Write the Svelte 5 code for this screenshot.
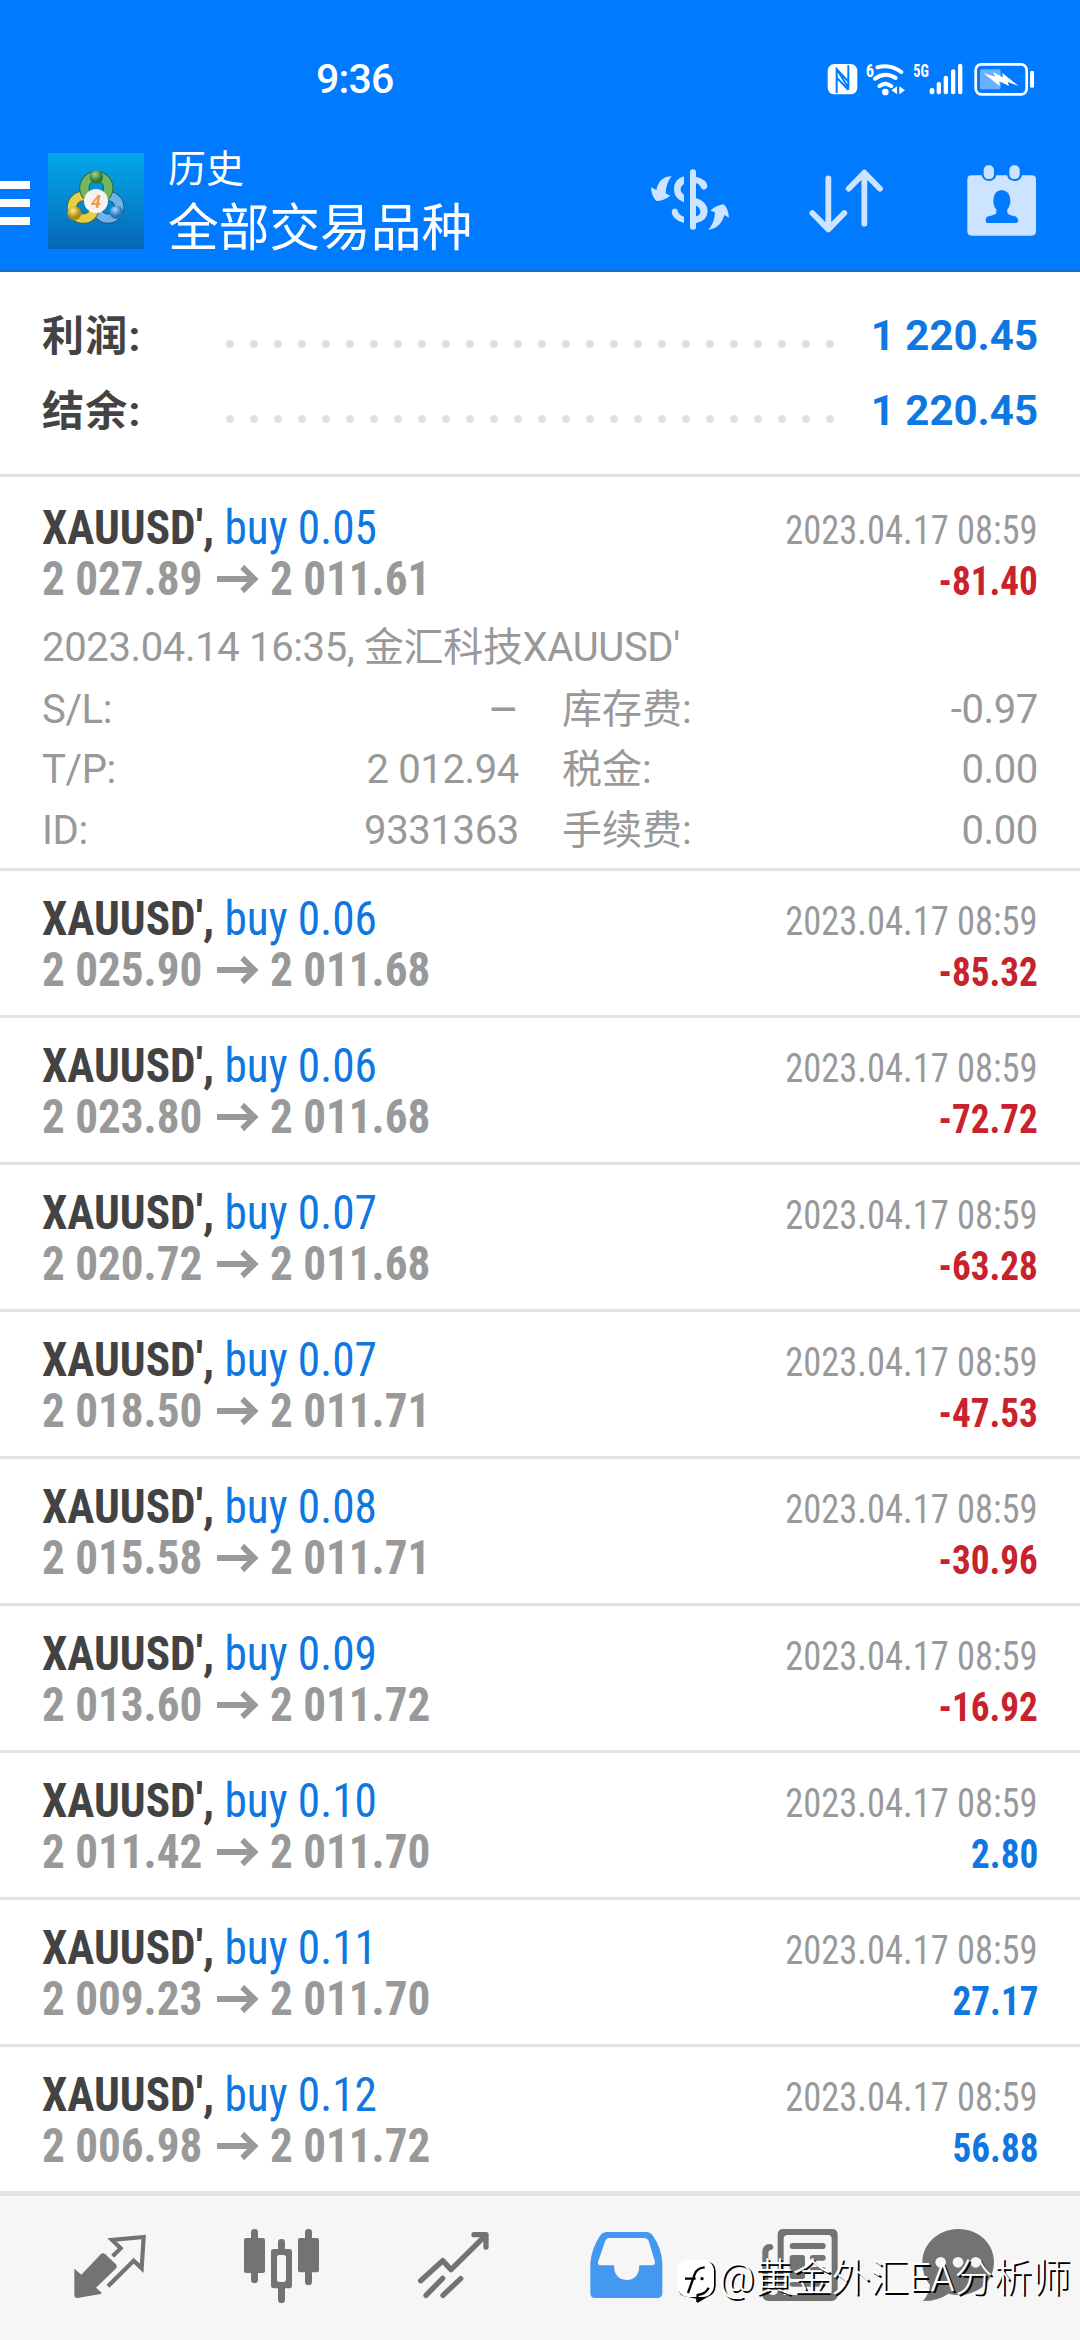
<script>
	const summary = [
		{ label: '利润:', value: '1 220.45' },
		{ label: '结余:', value: '1 220.45' }
	];

	const deals = [
		{ lot: '0.05', open: '2 027.89', close: '2 011.61', profit: '-81.40', expanded: true },
		{ lot: '0.06', open: '2 025.90', close: '2 011.68', profit: '-85.32' },
		{ lot: '0.06', open: '2 023.80', close: '2 011.68', profit: '-72.72' },
		{ lot: '0.07', open: '2 020.72', close: '2 011.68', profit: '-63.28' },
		{ lot: '0.07', open: '2 018.50', close: '2 011.71', profit: '-47.53' },
		{ lot: '0.08', open: '2 015.58', close: '2 011.71', profit: '-30.96' },
		{ lot: '0.09', open: '2 013.60', close: '2 011.72', profit: '-16.92' },
		{ lot: '0.10', open: '2 011.42', close: '2 011.70', profit: '2.80' },
		{ lot: '0.11', open: '2 009.23', close: '2 011.70', profit: '27.17' },
		{ lot: '0.12', open: '2 006.98', close: '2 011.72', profit: '56.88' }
	];

	const details = [
		['S/L:', '–', '库存费:', '-0.97'],
		['T/P:', '2 012.94', '税金:', '0.00'],
		['ID:', '9331363', '手续费:', '0.00']
	];
</script>

<div class="screen">
	<header>
		<div class="status">
			<span class="time">9:36</span>
			<svg class="status-icons" viewBox="555 30 635 110" fill="#fff">
				<!-- nfc -->
				<rect x="563" y="39" width="89" height="91" rx="20" />
				<path d="M590 126V54L625 92V116M590 54L625 110M590 80L625 116M625 43V92" fill="none" stroke="#007aff" stroke-width="6" />
				<!-- wifi -->
				<text class="net" x="677" y="77" font-size="55" textLength="25" lengthAdjust="spacingAndGlyphs">6</text>
				<g fill="none" stroke="#fff" stroke-width="12" stroke-linecap="round">
					<path d="M712 49Q750 38 784 63M705 83Q735 60 767 81M718 105Q736 92 754 105" />
				</g>
				<circle cx="736" cy="123" r="10" />
				<path d="M754 118L771 106V130ZM795 118L778 106V130Z" />
				<!-- signal -->
				<text class="net" x="820" y="78" font-size="53" textLength="47" lengthAdjust="spacingAndGlyphs">5G</text>
				<rect x="869" y="111" width="14" height="19" rx="6" />
				<rect x="890" y="93" width="13" height="37" rx="6" />
				<rect x="911" y="74" width="13" height="56" rx="6" />
				<rect x="933" y="55" width="13" height="75" rx="6" />
				<rect x="954" y="38" width="13" height="92" rx="6" />
				<!-- battery -->
				<rect x="1007" y="40" width="153" height="90" rx="17" fill="none" stroke="#fff" stroke-width="8" />
				<rect x="1020" y="55" width="62" height="60" rx="5" fill="#69b0ff" />
				<path d="M1030 66L1065 77L1060 64L1089 79L1086 65L1136 105L1103 93L1107 105L1078 91L1079 105Z" />
				<rect x="1170" y="60" width="12" height="50" rx="4" />
			</svg>
		</div>
		<div class="appbar">
			<div class="menu"><i></i><i></i><i></i></div>
			<svg class="logo" viewBox="144 39 288 288">
				<defs>
					<linearGradient id="bg" x1="0" y1="0" x2="0" y2="1">
						<stop offset="0" stop-color="#00a7ea" />
						<stop offset=".5" stop-color="#0588cf" />
						<stop offset="1" stop-color="#0465b4" />
					</linearGradient>
					<radialGradient id="green" cx=".4" cy=".3">
						<stop offset="0" stop-color="#a6d68c" />
						<stop offset="1" stop-color="#2e7a35" />
					</radialGradient>
					<radialGradient id="gold" cx=".4" cy=".3">
						<stop offset="0" stop-color="#fff08a" />
						<stop offset="1" stop-color="#b08a10" />
					</radialGradient>
					<radialGradient id="blue" cx=".4" cy=".3">
						<stop offset="0" stop-color="#a5dcff" />
						<stop offset="1" stop-color="#2374bd" />
					</radialGradient>
				</defs>
				<rect x="144" y="39" width="288" height="288" fill="url(#bg)" />
				<g stroke="#46bff0" stroke-opacity=".12" stroke-width="2">
					{#each [1, 2, 3, 4, 5, 6, 7, 8, 9, 10, 11] as n}
						<path d="M{144 + n * 24} 39V327M144 {39 + n * 24}H432" />
					{/each}
				</g>
				<g fill="none" stroke-width="25">
					<circle cx="324" cy="202" r="34" stroke="#174f85" stroke-width="30" />
					<circle cx="324" cy="202" r="34" stroke="#6fb4e6" />
					<circle cx="250" cy="202" r="34" stroke="#67651c" stroke-width="30" />
					<circle cx="250" cy="202" r="34" stroke="#e2d047" />
					<circle cx="289" cy="144" r="36" stroke="#236332" stroke-width="30" />
					<circle cx="289" cy="144" r="36" stroke="#74b562" />
				</g>
				<circle cx="289" cy="111" r="20" fill="url(#green)" />
				<circle cx="223" cy="220" r="21" fill="url(#gold)" />
				<circle cx="349" cy="217" r="20" fill="url(#blue)" />
				<circle cx="288" cy="183" r="36" fill="#f7f3ef" />
				<text class="four" x="288" y="203" text-anchor="middle">4</text>
			</svg>
			<div class="titles">
				<div class="small">历史</div>
				<div class="big">全部交易品种</div>
			</div>
			<div class="actions">
				<svg width="80" height="66.7" viewBox="30 353 240 200" fill="#cce4ff">
					<path d="M95 378Q58 378 49 419L33 411Q34 438 49 452Q70 452 91 436L77 429Q78 398 95 378Z" />
					<path d="M205 538Q242 534 253 494L267 502Q265 475 251 462Q229 464 211 481L225 486Q224 518 205 538Z" />
					<rect x="150" y="357" width="18" height="181" rx="8" />
					<path d="M132 378V400Q110 416 132 434V456Q102 446 102 417Q102 386 132 378Z" />
					<path d="M168 379Q202 387 202 410Q192 425 183 412Q179 401 168 398ZM168 443Q203 454 203 483Q203 511 168 519V498Q181 496 181 483Q181 472 168 466Z" />
					<path d="M132 518Q95 508 95 481Q102 469 112 478Q115 494 132 499Z" />
				</svg>
				<svg width="80" height="66.7" viewBox="500 353 240 200" fill="none" stroke="#cce4ff" stroke-width="17.500" stroke-linecap="round" stroke-linejoin="round">
					<path d="M564 384V537M516 488L564 537L612 488M672 520V367M625 415L672 367L719 415" />
				</svg>
				<svg width="76.700" height="76.700" viewBox="970 338 230 230" fill="#cce4ff">
					<path d="M996 375H1026Q1031 392 1048 392Q1066 392 1070 375H1102Q1106 392 1125 392Q1144 392 1147 375H1176Q1189 375 1189 388V543Q1189 556 1176 556H996Q983 556 983 543V388Q983 375 996 375Z" />
					<rect x="1032" y="345" width="31" height="41" rx="14" />
					<rect x="1109" y="345" width="31" height="41" rx="14" />
					<path d="M1086 419Q1113 421 1112 454Q1110 470 1103 477V488Q1108 495 1127 498Q1136 502 1135 513Q1135 518 1128 518H1045Q1038 518 1038 513Q1037 501 1046 498Q1066 494 1070 488V477Q1062 470 1061 454Q1060 421 1086 419Z" fill="#007aff" />
				</svg>
			</div>
		</div>
	</header>

	<section class="summary">
		{#each summary as s}
			<div class="total">
				<b class="label">{s.label}</b>
				<span class="dots"></span>
				<b class="value">{s.value}</b>
			</div>
		{/each}
	</section>

	<main>
		{#each deals as d}
			<article class:expanded={d.expanded}>
				<div class="line">
					<div class="name"><b>XAUUSD',</b> <span>buy {d.lot}</span></div>
					<div class="date">2023.04.17 08:59</div>
				</div>
				<div class="line">
					<div class="prices">
						<span>{d.open}</span>
						<svg width="45" height="30" viewBox="0 0 45 30" fill="none" stroke="#999" stroke-width="6"><path d="M0 15H40M27 3L40 15L27 27" /></svg>
						<span>{d.close}</span>
					</div>
					<div class="profit" class:loss={d.profit.startsWith('-')}>{d.profit}</div>
				</div>
				{#if d.expanded}
					<div class="details">
						<div class="comment">2023.04.14 16:35, 金汇科技XAUUSD'</div>
						{#each details as row}
							<div class="row">
								<span>{row[0]}</span>
								<span class="num" class:dash={row[1] === '–'}>{row[1]}</span>
								<span class="second">{row[2]}</span>
								<span class="num">{row[3]}</span>
							</div>
						{/each}
					</div>
				{/if}
			</article>
		{/each}
	</main>

	<nav>
		<!-- quotes -->
		<div class="tab">
			<svg viewBox="30 138 240 240" fill="#737373">
				<path d="M43 266L64 284L122 223Q129 216 136 223L168 253Q173 260 167 266L108 323L125 338Q125 342 118 343L52 354Q43 354 43 346Z" />
				<path d="M158 229L182 205L156 180L251 171L245 265L221 242L144 319" fill="none" stroke="#737373" stroke-width="12.500" />
			</svg>
		</div>
		<!-- charts -->
		<div class="tab">
			<svg viewBox="546 138 240 240" fill="#737373">
				<rect x="573" y="147" width="21" height="162" rx="10" />
				<rect x="552" y="174" width="63" height="105" rx="6" />
				<rect x="735" y="147" width="21" height="168" rx="10" />
				<rect x="714" y="174" width="63" height="103" rx="6" />
				<rect x="654" y="177" width="21" height="192" rx="10" />
				<rect x="633" y="207" width="63" height="118" rx="8" />
				<rect x="651" y="225" width="27" height="81" rx="7" fill="#f6f6f6" />
			</svg>
		</div>
		<!-- trade -->
		<div class="tab">
			<svg viewBox="1062 138 240 240" fill="none" stroke="#737373" stroke-width="16" stroke-linecap="round" stroke-linejoin="round">
				<path d="M1082 302L1148 242L1173 269L1275 168M1242 164H1278V201M1098 346L1148 295M1149 346L1202 296" />
				<path d="M1256 168H1278V190Z" fill="#737373" stroke="none" />
			</svg>
		</div>
		<!-- history -->
		<div class="tab">
			<svg viewBox="18 138 240 240">
				<path d="M78 156H201Q212 157 219 167Q245 205 247 250V339Q247 354 232 354H45Q31 354 31 339V250Q34 206 60 167Q67 157 78 156Z" fill="#4498f0" />
				<path d="M86 174H193Q202 175 206 182L225 246Q226 255 216 256H178Q177 300 140 300Q103 299 102 256H62Q52 255 54 246L76 182Q79 175 86 174Z" fill="#f6f6f6" />
			</svg>
		</div>
		<!-- news -->
		<div class="tab">
			<svg viewBox="534 138 240 240" fill="#737373">
				<path fill-rule="evenodd" d="M610 147H756Q773 147 773 164V343Q773 363 753 363H566Q547 362 547 343V216Q547 193 570 192Q580 193 580 202Q580 209 571 210Q565 211 565 219V334Q565 345 579 345Q593 344 593 332V164Q593 147 610 147ZM623 165Q611 165 611 176V345H744Q755 345 755 332V176Q755 165 744 165Z" />
				<rect x="629" y="189" width="108" height="18" rx="9" />
				<rect x="629" y="225" width="46" height="72" rx="8" />
				<rect x="690" y="225" width="47" height="17" rx="8" />
				<rect x="690" y="261" width="47" height="17" rx="8" />
				<rect x="629" y="306" width="108" height="14" rx="7" />
			</svg>
		</div>
		<!-- chat -->
		<div class="tab last">
			<svg viewBox="1014 138 240 240" fill="#737373">
				<path d="M1135 147C1196 147 1242 191 1242 246C1242 303 1196 345 1135 345Q1119 345 1105 341Q1075 363 1029 363Q1048 340 1050 315Q1027 288 1027 248C1027 192 1075 147 1135 147Z" />
				<g fill="#f6f6f6">
					<circle cx="1082" cy="247" r="16" />
					<circle cx="1134" cy="247" r="16" />
					<circle cx="1187" cy="247" r="16" />
				</g>
			</svg>
		</div>
		<div class="mark">
			<svg width="42" height="46" viewBox="286 236 126 138">
				<path d="M325 246H376Q404 248 405 276V319Q404 345 382 352L350 371L348 358L308 350Q296 345 296 334Z" fill="#000" />
				<rect x="290" y="241" width="110" height="112" rx="34" fill="#fff" />
				<path d="M322 341L342 285Q349 265 372 264M313 298H345M350 368L351 347Q376 343 384 325" fill="none" stroke="#000" stroke-width="7" />
				<circle cx="364" cy="298" r="5" />
			</svg>
			<span>@黄金外汇EA分析师</span>
		</div>
	</nav>
</div>

<style>
	:global(body) {
		background: #fff;
	}

	.screen {
		width: 1080px;
		height: 2340px;
		overflow: hidden;
		display: flex;
		flex-direction: column;
		font-family: Roboto, "Noto Sans CJK SC", sans-serif;
		color: #999;
		background: #fff;
	}

	svg {
		display: block;
		flex: none;
	}

	header {
		box-sizing: border-box;
		flex: none;
		height: 272px;
		background: #007aff;
		border-bottom: 2px solid #1a6dc4;
		color: #fff;
	}

	.status {
		box-sizing: border-box;
		height: 120px;
		padding: 38px 43px 0 316px;
		display: flex;
		align-items: center;
		justify-content: space-between;
	}

	.time {
		font-size: 41px;
		font-weight: 500;
		letter-spacing: -0.8px;
	}

	.status-icons {
		width: 211.700px;
		height: 36.700px;
	}

	.net {
		font-family: "Roboto Condensed", Roboto, sans-serif;
		font-weight: 700;
	}

	.appbar {
		box-sizing: border-box;
		height: 150px;
		padding: 12px 40px 0 0;
		display: flex;
		align-items: center;
	}

	.menu {
		width: 30px;
		display: grid;
		gap: 10px;
		margin: 4px 18px 0 0;
	}

	.menu i {
		height: 8px;
		background: #fff;
	}

	.logo {
		width: 96px;
		height: 96px;
	}

	.four {
		font-size: 54px;
		font-style: italic;
		font-weight: 700;
		fill: #ef9a4a;
	}

	.titles {
		margin: -5px 0 0 24px;
		line-height: 60px;
		white-space: nowrap;
	}

	.small {
		font-size: 38px;
	}

	.big {
		font-size: 50.700px;
	}

	.actions {
		margin-left: auto;
		display: flex;
		align-items: center;
		gap: 76.700px;
	}

	.summary {
		box-sizing: border-box;
		flex: none;
		height: 205px;
		padding: 26px 42px 0;
		border-bottom: 3px solid #e2e2e2;
	}

	.total {
		height: 75px;
		display: flex;
		align-items: center;
		font-size: 42px;
	}

	.label {
		width: 176px;
		margin-top: -6px;
		color: #434343;
		letter-spacing: 1.200px;
	}

	.dots {
		width: 624px;
		height: 24px;
		margin-top: 17px;
		background: radial-gradient(circle, #e0e0e0 3.500px, transparent 4.500px) 0 0 / 24px 24px;
	}

	.value {
		margin-left: auto;
		color: #0f77e0;
	}

	main {
		flex: 1;
		min-height: 0;
		overflow: hidden;
	}

	article {
		box-sizing: border-box;
		height: 147px;
		padding: 22px 42px 0;
		border-bottom: 3px solid #e2e2e2;
		font-family: "Roboto Condensed", Roboto, sans-serif;
	}

	article.expanded {
		height: 394px;
		padding-top: 25px;
	}

	.line {
		height: 51px;
		display: flex;
		justify-content: space-between;
		align-items: baseline;
		line-height: 51px;
		white-space: nowrap;
	}

	/* the list font is squeezed a little further than the condensed cut */
	.name,
	.prices {
		font-size: 48px;
		transform: scaleX(0.943);
		transform-origin: left;
	}

	.name b {
		color: #434343;
	}

	.name span {
		color: #0f77e0;
	}

	.prices {
		display: flex;
		align-items: center;
		font-weight: 700;
		transform: scaleX(0.94);
	}

	.prices svg {
		margin: 0 12px 0 15px;
	}

	.date,
	.profit {
		font-size: 40px;
		transform: scaleX(0.912);
		transform-origin: right;
	}

	.profit {
		font-weight: 700;
		transform: scaleX(0.93);
		color: #0f77e0;
	}

	.profit.loss {
		color: #c8232c;
	}

	.details {
		font-family: Roboto, "Noto Sans CJK SC", sans-serif;
		font-size: 40px;
		line-height: 60.500px;
		letter-spacing: -0.350px;
		padding-top: 14px;
	}

	.comment {
		height: 61.500px;
	}

	.row {
		height: 60.500px;
		display: grid;
		grid-template-columns: 100px 377px 204px 315px;
	}

	.num {
		text-align: right;
	}

	.dash {
		font-size: 48px;
	}

	.second {
		padding-left: 43px;
		letter-spacing: 0;
	}

	nav {
		box-sizing: border-box;
		flex: none;
		position: relative;
		height: 149px;
		padding: 30px 0 0 24px;
		display: flex;
		background: #f6f6f6;
		border-top: 5px solid #e2e2e2;
	}

	.tab {
		width: 172px;
		display: flex;
		justify-content: center;
		align-items: flex-start;
	}

	.tab svg {
		width: 80px;
		height: 80px;
	}

	.tab.last {
		width: 148px;
	}

	/* author mark lies over the tab icons */
	.mark {
		position: absolute;
		left: 676px;
		top: 62px;
		display: flex;
		align-items: center;
		color: #fff;
		font-size: 38.600px;
		font-weight: 300;
		line-height: 46px;
		white-space: nowrap;
		text-shadow: 2px 2px 0 #000;
	}

	.mark span {
		margin: -7px 0 0 1px;
	}
</style>
